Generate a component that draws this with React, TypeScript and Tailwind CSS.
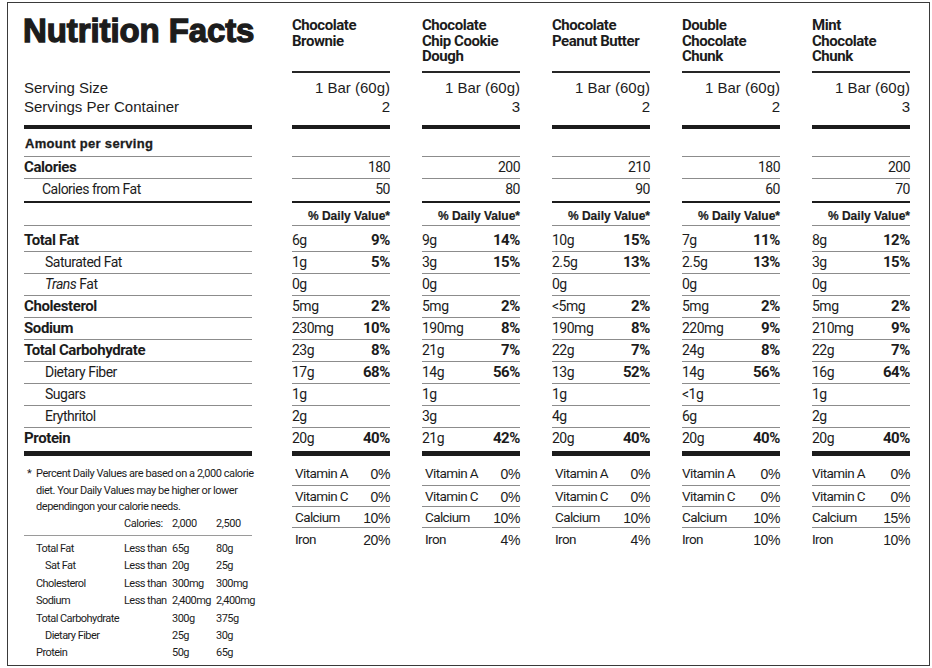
const COND = "font-['Roboto','Liberation_Sans',sans-serif]";
const SANS = "font-['Liberation_Sans',Arial,sans-serif]";
const REG = `${COND} text-[14px] tracking-[-0.5px]`;
const BOLD = `${COND} font-bold text-[15px] tracking-[-0.4px]`;
const THIN = "border-b border-[#8c8c8c]";

type Product = {
  name: string[];
  servings: string;
  cal: string;
  fatCal: string;
  nutrients: [string, string][];
  vitamins: string[];
  indent?: boolean;
};

const PRODUCTS: Product[] = [
  {
    name: ["Chocolate", "Brownie"],
    servings: "2",
    cal: "180",
    fatCal: "50",
    nutrients: [["6g", "9%"], ["1g", "5%"], ["0g", ""], ["5mg", "2%"], ["230mg", "10%"], ["23g", "8%"], ["17g", "68%"], ["1g", ""], ["2g", ""], ["20g", "40%"]],
    vitamins: ["0%", "0%", "10%", "20%"],
    indent: true,
  },
  {
    name: ["Chocolate", "Chip Cookie", "Dough"],
    servings: "3",
    cal: "200",
    fatCal: "80",
    nutrients: [["9g", "14%"], ["3g", "15%"], ["0g", ""], ["5mg", "2%"], ["190mg", "8%"], ["21g", "7%"], ["14g", "56%"], ["1g", ""], ["3g", ""], ["21g", "42%"]],
    vitamins: ["0%", "0%", "10%", "4%"],
    indent: true,
  },
  {
    name: ["Chocolate", "Peanut Butter"],
    servings: "2",
    cal: "210",
    fatCal: "90",
    nutrients: [["10g", "15%"], ["2.5g", "13%"], ["0g", ""], ["<5mg", "2%"], ["190mg", "8%"], ["22g", "7%"], ["13g", "52%"], ["1g", ""], ["4g", ""], ["20g", "40%"]],
    vitamins: ["0%", "0%", "10%", "4%"],
    indent: true,
  },
  {
    name: ["Double", "Chocolate", "Chunk"],
    servings: "2",
    cal: "180",
    fatCal: "60",
    nutrients: [["7g", "11%"], ["2.5g", "13%"], ["0g", ""], ["5mg", "2%"], ["220mg", "9%"], ["24g", "8%"], ["14g", "56%"], ["<1g", ""], ["6g", ""], ["20g", "40%"]],
    vitamins: ["0%", "0%", "10%", "10%"],
  },
  {
    name: ["Mint", "Chocolate", "Chunk"],
    servings: "3",
    cal: "200",
    fatCal: "70",
    nutrients: [["8g", "12%"], ["3g", "15%"], ["0g", ""], ["5mg", "2%"], ["210mg", "9%"], ["22g", "7%"], ["16g", "64%"], ["1g", ""], ["2g", ""], ["20g", "40%"]],
    vitamins: ["0%", "0%", "15%", "10%"],
  },
];

const NUTRIENTS = [
  { label: "Total Fat", bold: true },
  { label: "Saturated Fat", indent: true },
  { label: "Fat", indent: true, italic: "Trans" },
  { label: "Cholesterol", bold: true },
  { label: "Sodium", bold: true },
  { label: "Total Carbohydrate", bold: true },
  { label: "Dietary Fiber", indent: true },
  { label: "Sugars", indent: true },
  { label: "Erythritol", indent: true },
  { label: "Protein", bold: true },
];

const VITAMINS = ["Vitamin A", "Vitamin C", "Calcium", "Iron"];

const DAILY = [
  { label: "Total Fat", less: true, a: "65g", b: "80g" },
  { label: "Sat Fat", less: true, a: "20g", b: "25g", indent: true },
  { label: "Cholesterol", less: true, a: "300mg", b: "300mg" },
  { label: "Sodium", less: true, a: "2,400mg", b: "2,400mg" },
  { label: "Total Carbohydrate", a: "300g", b: "375g" },
  { label: "Dietary Fiber", a: "25g", b: "30g", indent: true },
  { label: "Protein", a: "50g", b: "65g" },
];

// one horizontal band: label cell on the left, one cell per product
function Band({
  left,
  leftClass = "",
  cellClass = "",
  cell,
}: {
  left?: React.ReactNode;
  leftClass?: string;
  cellClass?: string;
  cell: (p: Product, i: number) => React.ReactNode;
}) {
  return (
    <div className="flex">
      <div className={`w-[228px] shrink-0 ${leftClass}`}>{left}</div>
      <div className="ml-10 flex gap-8">
        {PRODUCTS.map((p, i) => (
          <div key={i} className={`w-[98px] shrink-0 ${cellClass}`}>
            {cell(p, i)}
          </div>
        ))}
      </div>
    </div>
  );
}

export default function App() {
  return (
    <div className="w-[932px] h-[668px] bg-white text-[#1c1c1c] overflow-hidden">
      <div className="ml-[7px] mt-[2px] w-[923px] h-[664px] border border-[#3a3a3a] pl-4">
        {/* header */}
        <Band
          leftClass="h-[70px] pt-3"
          cellClass="h-[70px] pt-[15px] border-b-2 border-[#262626]"
          left={
            <h1 className={`${SANS} font-black text-[33px] leading-[32px] tracking-[-0.1px] [-webkit-text-stroke:1.3px_#1c1c1c] -ml-[1px] whitespace-nowrap`}>
              Nutrition Facts
            </h1>
          }
          cell={(p) => (
            <div className={`${COND} font-bold text-[15px] leading-[15.5px] tracking-[-0.45px]`}>
              {p.name.map((n) => (
                <div key={n}>{n}</div>
              ))}
            </div>
          )}
        />

        {/* serving */}
        <Band
          leftClass={`h-14 pt-[5px] border-b-4 border-[#1c1c1c] ${SANS} text-[15px] leading-[19px]`}
          cellClass={`h-14 pt-[5px] border-b-4 border-[#1c1c1c] ${SANS} text-[15px] leading-[19px] text-right`}
          left={
            <>
              <div>Serving Size</div>
              <div>Servings Per Container</div>
            </>
          }
          cell={(p) => (
            <>
              <div>1 Bar (60g)</div>
              <div>{p.servings}</div>
            </>
          )}
        />

        {/* amount per serving */}
        <Band
          leftClass={`h-7 pt-[7px] ${THIN} ${SANS} font-bold text-[13px] leading-4 tracking-[0.3px] [-webkit-text-stroke:0.3px_#1c1c1c] pl-px`}
          cellClass={`h-7 ${THIN}`}
          left="Amount per serving"
          cell={() => null}
        />

        <Band
          leftClass={`h-[22px] ${THIN} ${BOLD} leading-5`}
          cellClass={`h-[22px] ${THIN} ${REG} leading-5 text-right`}
          left="Calories"
          cell={(p) => p.cal}
        />

        <Band
          leftClass={`h-6 border-b-2 border-[#1c1c1c] ${REG} leading-5 pl-[18px]`}
          cellClass={`h-6 border-b-2 border-[#1c1c1c] ${REG} leading-5 text-right`}
          left="Calories from Fat"
          cell={(p) => p.fatCal}
        />

        <Band
          leftClass={`h-[23px] ${THIN}`}
          cellClass={`h-[23px] pt-[5px] ${THIN} ${SANS} font-bold text-[12px] leading-4 text-right [-webkit-text-stroke:0.2px_#1c1c1c]`}
          cell={() => "% Daily Value*"}
        />

        {/* nutrients */}
        {NUTRIENTS.map((n, i) => {
          const first = i === 0;
          const last = i === NUTRIENTS.length - 1;
          const size = first ? "h-[26px] pt-[3px]" : last ? "h-[28px] pb-[3px]" : "h-[22px]";
          const rule = last ? "border-b-[5px] border-[#1c1c1c]" : THIN;
          return (
            <Band
              key={n.label + i}
              leftClass={`flex items-center ${size} ${rule} ${n.bold ? BOLD : REG} ${n.indent ? "pl-[21px]" : ""}`}
              cellClass={`flex items-center justify-between ${size} ${rule}`}
              left={
                n.italic ? (
                  <span>
                    <i>{n.italic}</i> {n.label}
                  </span>
                ) : (
                  n.label
                )
              }
              cell={(p) => (
                <>
                  <span className={REG}>{p.nutrients[i][0]}</span>
                  <span className={BOLD}>{p.nutrients[i][1]}</span>
                </>
              )}
            />
          );
        })}

        {/* bottom: footnote + vitamins */}
        <div className="flex">
          <div className={`w-[228px] shrink-0 pt-[10px] ${COND} text-[11px] tracking-[-0.45px] leading-[16.5px]`}>
            <div className="flex pl-[3px]">
              <span className="w-[9px] shrink-0">*</span>
              <div className="whitespace-nowrap">
                Percent Daily Values are based on a 2,000 calorie
                <br />
                diet. Your Daily Values may be higher or lower
                <br />
                dependingon your calorie needs.
              </div>
            </div>
            <div className="grid grid-cols-[88px_48px_44px_1fr] pl-3 pb-[3px] border-b border-[#9a9a9a]">
              <span />
              <span>Calories:</span>
              <span>2,000</span>
              <span>2,500</span>
            </div>
            <div className="pt-1 tracking-[-0.55px] leading-[17.4px]">
              {DAILY.map((d) => (
                <div key={d.label} className="grid grid-cols-[88px_48px_44px_1fr] pl-3 whitespace-nowrap">
                  <span className={d.indent ? "pl-[9px]" : ""}>{d.label}</span>
                  <span>{d.less ? "Less than" : ""}</span>
                  <span>{d.a}</span>
                  <span>{d.b}</span>
                </div>
              ))}
            </div>
          </div>
          <div className="ml-10 flex gap-8">
            {PRODUCTS.map((p, i) => (
              <div key={i} className="w-[98px] shrink-0">
                {VITAMINS.map((v, j) => {
                  const size = j === 0 ? "h-[30px] pt-[5px]" : j === 3 ? "h-[22px]" : "h-[21px]";
                  const rule = j === 3 ? "" : THIN;
                  return (
                    <div key={v} className={`flex items-center justify-between ${size} ${rule}`}>
                      <span className={`${COND} text-[13.5px] tracking-[-0.6px] ${p.indent ? "pl-[3px]" : ""}`}>{v}</span>
                      <span className={`${SANS} text-[14px] tracking-[-0.4px] pt-[3px]`}>{p.vitamins[j]}</span>
                    </div>
                  );
                })}
              </div>
            ))}
          </div>
        </div>
      </div>
    </div>
  );
}
